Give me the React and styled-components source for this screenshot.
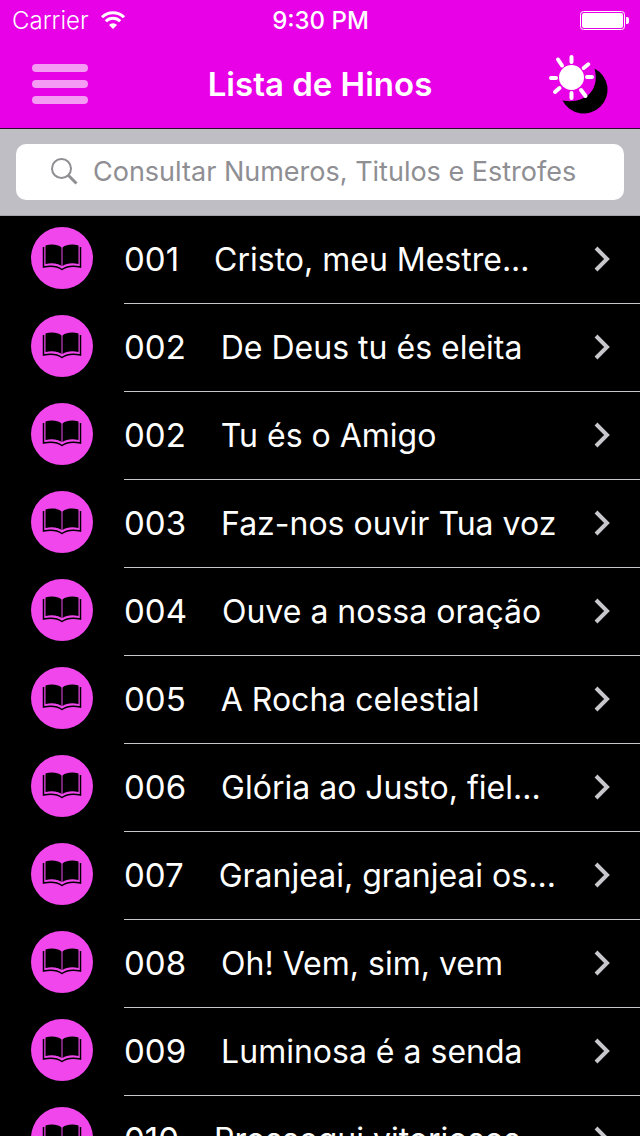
import { useState } from 'react';
import styled, { createGlobalStyle } from 'styled-components';

const GlobalStyle = createGlobalStyle`
    * {
        box-sizing: border-box;
    }

    body {
        margin: 0;
        background: #000000;
        font-family: Inter, "Liberation Sans", sans-serif;
    }
`

const Screen = styled.div`
    display: flex;
    flex-direction: column;
    height: 100vh;
    overflow: hidden;
    color: #ffffff;
`

const Header = styled.header`
    flex: none;
    background: #e800e6;
    border-bottom: 1px solid #2b0a2b;
`

const StatusBar = styled.div`
    display: grid;
    grid-template-columns: 1fr auto 1fr;
    align-items: center;
    height: 40px;
    padding: 1px 11px 0 12px;
    font-size: 24px;
`

const Carrier = styled.div`
    display: flex;
    align-items: center;
    gap: 11px;
    font-weight: 300;
`

const Clock = styled.time`
    font-weight: 500;
`

const Battery = styled.svg`
    justify-self: end;
`

const NavBar = styled.nav`
    display: grid;
    grid-template-columns: 1fr auto 1fr;
    align-items: center;
    height: 88px;
    padding: 0 32px;
`

const NavButton = styled.button`
    display: flex;
    justify-self: ${({$align}) => $align};
    padding: 0;
    border: none;
    background: none;
    cursor: pointer;
`

const Title = styled.h1`
    margin: 0;
    font-size: 33px;
    font-weight: 600;
`

const SearchBar = styled.form`
    flex: none;
    padding: 15px 16px;
    background: #bfbec4;
    border-bottom: 1px solid #a5a4aa;
`

const SearchField = styled.label`
    display: flex;
    align-items: center;
    gap: 15px;
    height: 56px;
    padding: 0 34px 1px 35px;
    border-radius: 10px;
    background: #ffffff;
`

const SearchInput = styled.input`
    flex: 1;
    min-width: 0;
    padding: 0;
    border: none;
    outline: none;
    background: none;
    color: #000000;
    font-family: inherit;
    font-size: 27px;

    &::placeholder {
        color: #8e8e93;
        opacity: 1;
    }
`

const List = styled.ul`
    flex: 1;
    min-height: 0;
    margin: 0;
    padding: 0;
    overflow-y: auto;
    list-style: none;
    scrollbar-width: none;
`

const Row = styled.a`
    display: flex;
    align-items: center;
    gap: 31px;
    padding-left: 31px;
    color: inherit;
    text-decoration: none;
`

const BookBadge = styled.svg`
    flex: none;
    margin-bottom: 4px;
`

const RowBody = styled.div`
    flex: 1;
    min-width: 0;
    display: flex;
    align-items: center;
    justify-content: space-between;
    height: 88px;
    padding: 0 28px 2px 0;
    border-bottom: 1px solid #c8c7cc;
`

const RowText = styled.div`
    display: flex;
    align-items: baseline;
    gap: 35px;
    white-space: nowrap;
`

const HymnNumber = styled.span`
    font-size: 33px;
`

const HymnTitle = styled.span`
    font-size: 32px;
`

const hymns = [
    {number: '001', title: 'Cristo, meu Mestre...'},
    {number: '002', title: 'De Deus tu és eleita'},
    {number: '002', title: 'Tu és o Amigo'},
    {number: '003', title: 'Faz-nos ouvir Tua voz'},
    {number: '004', title: 'Ouve a nossa oração'},
    {number: '005', title: 'A Rocha celestial'},
    {number: '006', title: 'Glória ao Justo, fiel...'},
    {number: '007', title: 'Granjeai, granjeai os...'},
    {number: '008', title: 'Oh! Vem, sim, vem'},
    {number: '009', title: 'Luminosa é a senda'},
    {number: '010', title: 'Prossegui vitoriosos'},
];

const WifiIcon = () => (
    <svg width="26" height="20" viewBox="0 0 26 20" fill="none" stroke="#ffffff" strokeWidth="3">
        <path d="M2 6.200a15.600 15.600 0 0 1 22 0" />
        <path d="M5.800 10.200a10.200 10.200 0 0 1 14.400 0" />
        <path d="M13 18l-4-4a5.700 5.700 0 0 1 8 0z" fill="#ffffff" stroke="none" />
    </svg>
)

const BatteryIcon = () => (
    <Battery width="49" height="20" viewBox="0 0 49 20">
        <rect x="0.5" y="0.5" width="44" height="18" rx="3" fill="none" stroke="#ffffff" />
        <rect x="2" y="2" width="41" height="15" rx="2" fill="#ffffff" />
        <path d="M46 6h1a2 2 0 0 1 2 2v3a2 2 0 0 1-2 2h-1z" fill="#ffffff" />
    </Battery>
)

const MenuIcon = () => (
    <svg width="56" height="40" viewBox="0 0 56 40" fill="#f59af4">
        <rect width="56" height="8" rx="4" />
        <rect y="16" width="56" height="8" rx="4" />
        <rect y="32" width="56" height="8" rx="4" />
    </svg>
)

const DayNightIcon = () => (
    <svg width="60" height="60" viewBox="0 0 60 60">
        <path d="M46.500 14.500a23.800 23.800 0 1 1-32 32c22 4 38-10 32-32z" fill="#000000" />
        <circle cx="23.5" cy="23.5" r="12.5" fill="#ffffff" />
        <path
            d="M23.500 3v5M23.500 39v5M3 24h5M39 23h5M10 5.500l4 6M35.700 14l4.600-3.700M7 38l4.500-4M33 36l4.500 6"
            stroke="#ffffff" strokeWidth="4" strokeLinecap="round"
        />
    </svg>
)

const SearchIcon = () => (
    <svg width="27" height="27" viewBox="0 0 27 27" fill="none" stroke="#8e8e93">
        <circle cx="10.5" cy="10.5" r="9.5" strokeWidth="2" />
        <path d="M17 17l8.500 8.500" strokeWidth="3" />
    </svg>
)

const BookIcon = () => (
    <BookBadge width="62" height="62" viewBox="0 0 62 62">
        <circle cx="31" cy="31" r="31" fill="#f046ec" />
        <path d="M14.500 18.500c5-1.500 12-1.500 16 2v18.500c-4-3-10-3.500-16-2zM47.500 18.500c-5-1.500-12-1.500-16 2v18.500c4-3 10-3.500 16-2z" fill="#000000" />
        <path d="M12.500 20v20c7-1.500 13-1.500 18.500 2.500c5.500-4 11.500-4 18.500-2.500v-20" fill="none" stroke="#000000" strokeWidth="1.5" />
    </BookBadge>
)

const ChevronIcon = () => (
    <svg width="18" height="28" viewBox="0 0 18 28" fill="none" stroke="#c7c7cc" strokeWidth="4">
        <path d="M2 3l11 11l-11 11" />
    </svg>
)

const HymnRow = ({hymn}) => (
    <li>
        <Row href={`#${hymn.number}`}>
            <BookIcon />
            <RowBody>
                <RowText>
                    <HymnNumber>{hymn.number}</HymnNumber>
                    <HymnTitle>{hymn.title}</HymnTitle>
                </RowText>
                <ChevronIcon />
            </RowBody>
        </Row>
    </li>
)

const App = () => {

    const [query, setQuery] = useState('');

    const visible = hymns.filter(({number, title}) =>
        `${number} ${title}`.toLowerCase().includes(query.toLowerCase())
    );

    return (
        <Screen>
            <GlobalStyle />
            <Header>
                <StatusBar>
                    <Carrier>Carrier <WifiIcon /></Carrier>
                    <Clock>9:30 PM</Clock>
                    <BatteryIcon />
                </StatusBar>
                <NavBar>
                    <NavButton $align="start" aria-label="Menu"><MenuIcon /></NavButton>
                    <Title>Lista de Hinos</Title>
                    <NavButton $align="end" aria-label="Modo noturno"><DayNightIcon /></NavButton>
                </NavBar>
            </Header>
            <SearchBar onSubmit={event => event.preventDefault()}>
                <SearchField>
                    <SearchIcon />
                    <SearchInput
                        type="text"
                        aria-label="Consultar"
                        placeholder="Consultar Numeros, Titulos e Estrofes"
                        value={query}
                        onChange={event => setQuery(event.target.value)}
                    />
                </SearchField>
            </SearchBar>
            <List>
                {visible.map((hymn, index) => <HymnRow key={index} hymn={hymn} />)}
            </List>
        </Screen>
    );
}

export default App;
